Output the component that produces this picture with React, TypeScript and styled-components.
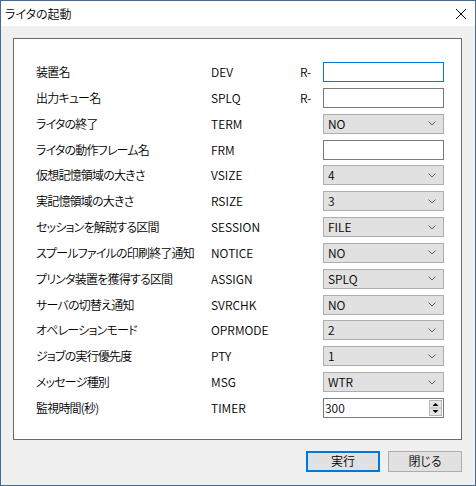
import React from "react";
import styled, { createGlobalStyle } from "styled-components";

const GlobalStyle = createGlobalStyle`
  html, body { margin: 0; padding: 0; background: #ffffff; }
  body {
    font-family: "Noto Sans CJK JP", "Noto Sans", sans-serif;
    font-size: 12px;
    font-weight: 350;
    color: #000;
    font-feature-settings: "palt";
  }
  * { box-sizing: border-box; }
`;

const Window = styled.div`
  width: 476px;
  height: 486px;
  border: 1px solid #46698f;
  display: flex;
  flex-direction: column;
  background: #f0f0f0;
`;

const TitleBar = styled.div`
  height: 25px;
  background: #ffffff;
  display: flex;
  align-items: center;
  justify-content: space-between;
  padding: 0 9px 0 4px;
  flex-shrink: 0;
`;

const Title = styled.span`
  font-size: 12px;
  line-height: 1;
  color: #000;
`;

const CloseGlyph = styled.svg`
  width: 10px;
  height: 10px;
  display: block;
`;

const Body = styled.div`
  flex: 1;
  display: flex;
  flex-direction: column;
  padding: 12px 13px 0 12px;
`;

const Panel = styled.div`
  background: #ffffff;
  border: 1px solid #6a6a6a;
  padding: 23px 0 21px 22px;
  display: flex;
  flex-direction: column;
  gap: 5.846px;
`;

const Row = styled.div`
  display: grid;
  grid-template-columns: 175px 89px 23px 121px;
  height: 20px;
  align-items: center;
`;

const Label = styled.span`
  white-space: nowrap;
  line-height: 1;
  letter-spacing: -0.8px;
`;

const Code = styled.span`
  white-space: nowrap;
  line-height: 1;
`;

const Prefix = styled.span`
  line-height: 1;
`;

const TextBox = styled.div<{ $focused?: boolean }>`
  height: 20px;
  width: 121px;
  background: #fff;
  border: 1px solid ${(p) => (p.$focused ? "#0078d7" : "#7a7a7a")};
`;

const Combo = styled.div`
  height: 20px;
  width: 121px;
  background: #e1e1e1;
  border: 1px solid #adadad;
  display: flex;
  align-items: center;
  justify-content: space-between;
  padding: 0 7px 0 4px;
  line-height: 1;
`;

const Chevron = styled.svg`
  width: 8px;
  height: 5px;
  display: block;
`;

const SpinBox = styled.div`
  height: 20px;
  width: 121px;
  background: #fff;
  border: 1px solid #7a7a7a;
  display: flex;
  align-items: center;
  justify-content: space-between;
  padding: 0 1px 0 1px;
  line-height: 1;
`;

const SpinButtons = styled.svg`
  width: 13px;
  height: 16px;
  display: block;
`;

const Footer = styled.div`
  display: flex;
  justify-content: flex-end;
  gap: 8px;
  padding-top: 11px;
`;

const Button = styled.div<{ $default?: boolean }>`
  width: 74px;
  height: 21px;
  background: #e1e1e1;
  border: ${(p) => (p.$default ? "2px solid #0078d7" : "1px solid #adadad")};
  display: flex;
  align-items: center;
  justify-content: center;
  line-height: 1;
`;

type Field =
  | { label: string; code: string; kind: "text"; prefix?: string; focused?: boolean }
  | { label: string; code: string; kind: "combo"; value: string }
  | { label: string; code: string; kind: "spin"; value: string };

const fields: Field[] = [
  { label: "装置名", code: "DEV", kind: "text", prefix: "R-", focused: true },
  { label: "出力キュー名", code: "SPLQ", kind: "text", prefix: "R-" },
  { label: "ライタの終了", code: "TERM", kind: "combo", value: "NO" },
  { label: "ライタの動作フレーム名", code: "FRM", kind: "text" },
  { label: "仮想記憶領域の大きさ", code: "VSIZE", kind: "combo", value: "4" },
  { label: "実記憶領域の大きさ", code: "RSIZE", kind: "combo", value: "3" },
  { label: "セッションを解説する区間", code: "SESSION", kind: "combo", value: "FILE" },
  { label: "スプールファイルの印刷終了通知", code: "NOTICE", kind: "combo", value: "NO" },
  { label: "プリンタ装置を獲得する区間", code: "ASSIGN", kind: "combo", value: "SPLQ" },
  { label: "サーバの切替え通知", code: "SVRCHK", kind: "combo", value: "NO" },
  { label: "オペレーションモード", code: "OPRMODE", kind: "combo", value: "2" },
  { label: "ジョブの実行優先度", code: "PTY", kind: "combo", value: "1" },
  { label: "メッセージ種別", code: "MSG", kind: "combo", value: "WTR" },
  { label: "監視時間(秒)", code: "TIMER", kind: "spin", value: "300" },
];

const ChevronIcon = () => (
  <Chevron viewBox="0 0 8 5">
    <polyline points="0.5,0.5 4,4 7.5,0.5" fill="none" stroke="#606060" strokeWidth="1" />
  </Chevron>
);

const SpinIcon = () => (
  <SpinButtons viewBox="0 0 13 16">
    <rect x="0.5" y="0.5" width="12" height="15" fill="#e6e6e6" stroke="#b5b5b5" />
    <line x1="1" y1="8" x2="12" y2="8" stroke="#b5b5b5" />
    <polygon points="6.5,3 9.5,6 3.5,6" fill="#000" />
    <polygon points="3.5,10 9.5,10 6.5,13" fill="#000" />
  </SpinButtons>
);

function Control({ f }: { f: Field }) {
  if (f.kind === "text") return <TextBox $focused={f.focused} />;
  if (f.kind === "combo")
    return (
      <Combo>
        <span>{f.value}</span>
        <ChevronIcon />
      </Combo>
    );
  return (
    <SpinBox>
      <span>{f.value}</span>
      <SpinIcon />
    </SpinBox>
  );
}

export default function App() {
  return (
    <>
      <GlobalStyle />
      <Window>
        <TitleBar>
          <Title>ライタの起動</Title>
          <CloseGlyph viewBox="0 0 10 10">
            <line x1="0" y1="0" x2="10" y2="10" stroke="#000" strokeWidth="1" />
            <line x1="10" y1="0" x2="0" y2="10" stroke="#000" strokeWidth="1" />
          </CloseGlyph>
        </TitleBar>
        <Body>
          <Panel>
            {fields.map((f) => (
              <Row key={f.code}>
                <Label>{f.label}</Label>
                <Code>{f.code}</Code>
                <Prefix>{f.kind === "text" ? f.prefix ?? "" : ""}</Prefix>
                <Control f={f} />
              </Row>
            ))}
          </Panel>
          <Footer>
            <Button $default>実行</Button>
            <Button>閉じる</Button>
          </Footer>
        </Body>
      </Window>
    </>
  );
}
